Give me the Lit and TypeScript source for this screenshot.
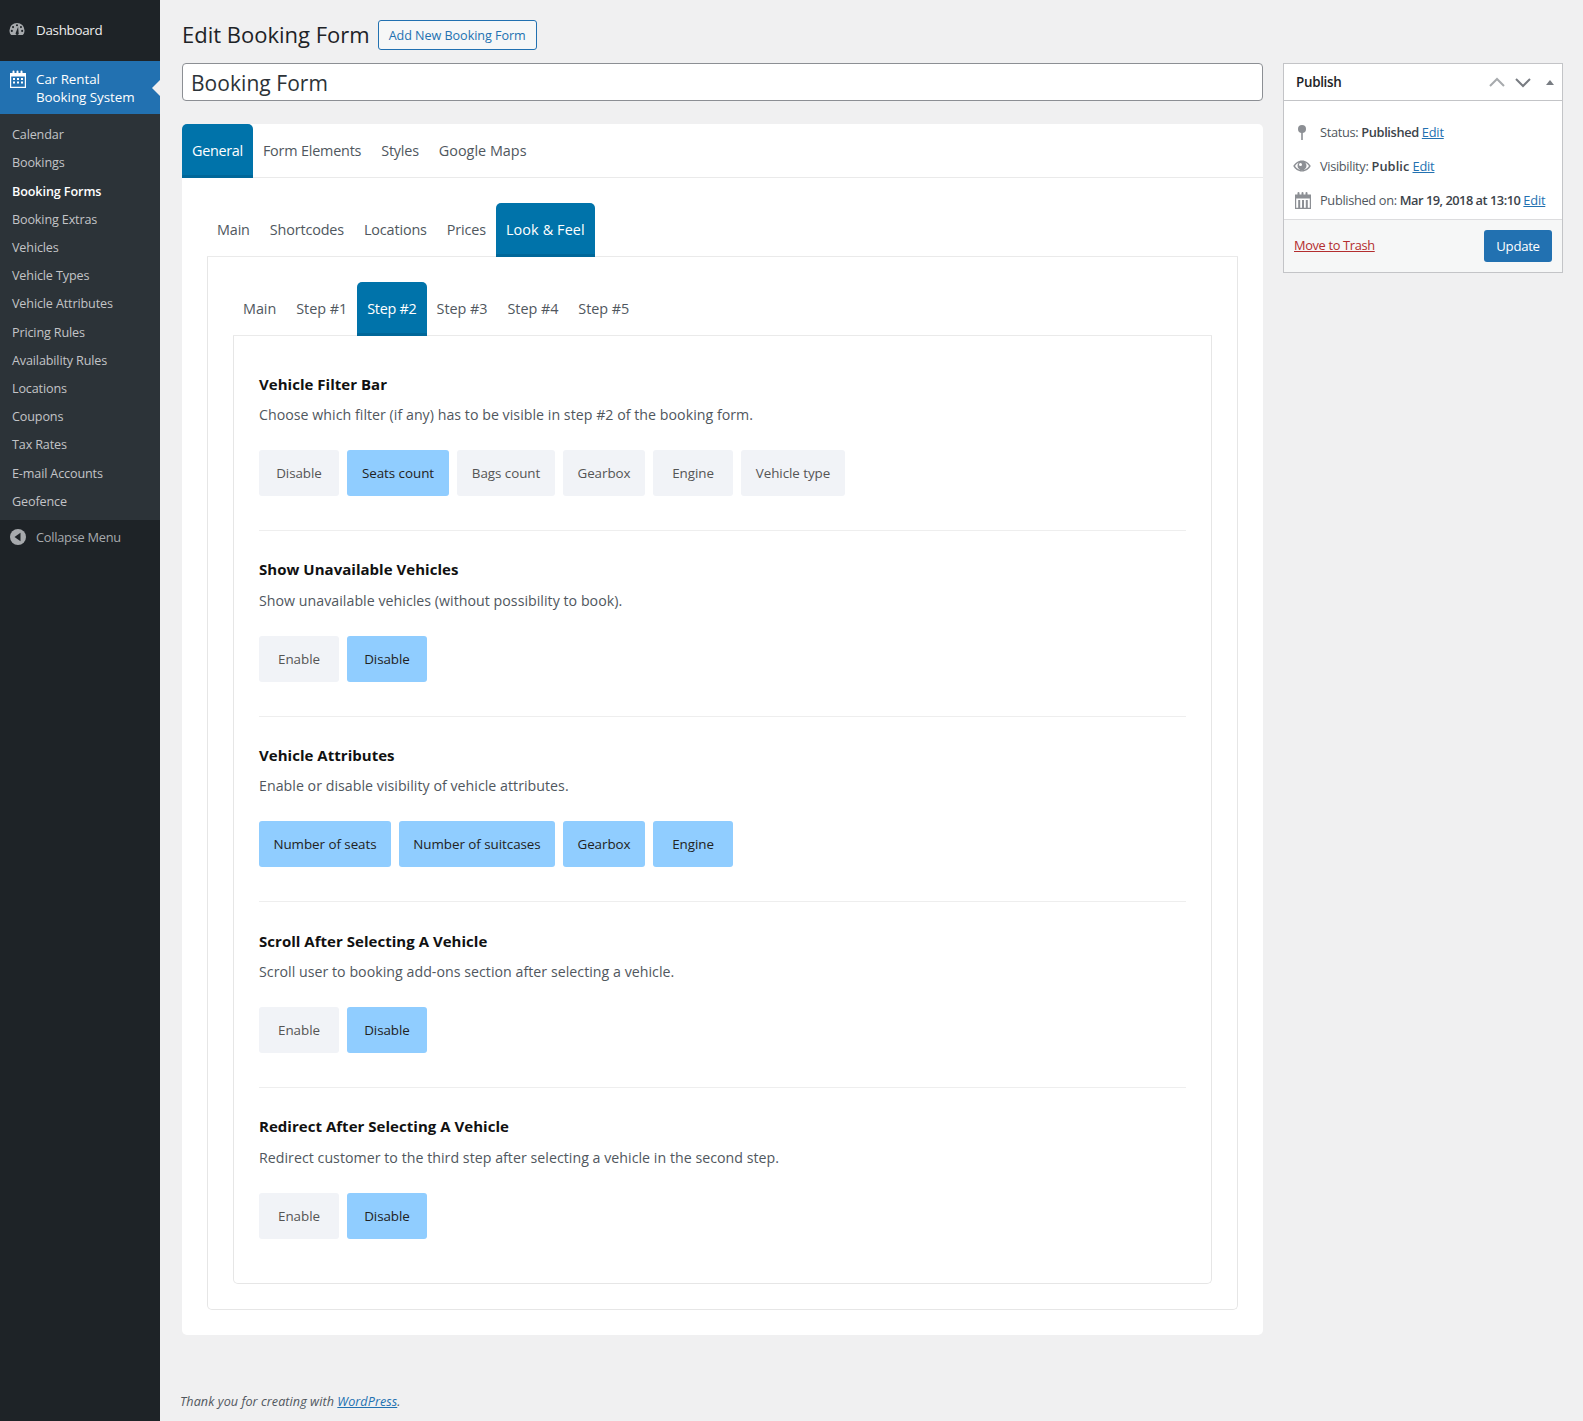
import { LitElement, html, css, svg } from "lit";
import { customElement } from "lit/decorators.js";

const menu = ["Calendar","Bookings","Booking Forms","Booking Extras","Vehicles","Vehicle Types","Vehicle Attributes","Pricing Rules","Availability Rules","Locations","Coupons","Tax Rates","E-mail Accounts","Geofence"];
const sections = [
  { t: "Vehicle Filter Bar", d: "Choose which filter (if any) has to be visible in step #2 of the booking form.", b: [["Disable",0,80],["Seats count",1,102],["Bags count",0,98],["Gearbox",0,82],["Engine",0,80],["Vehicle type",0,104]] },
  { t: "Show Unavailable Vehicles", d: "Show unavailable vehicles (without possibility to book).", b: [["Enable",0,80],["Disable",1,80]] },
  { t: "Vehicle Attributes", d: "Enable or disable visibility of vehicle attributes.", b: [["Number of seats",1,132],["Number of suitcases",1,156],["Gearbox",1,82],["Engine",1,80]] },
  { t: "Scroll After Selecting A Vehicle", d: "Scroll user to booking add-ons section after selecting a vehicle.", b: [["Enable",0,80],["Disable",1,80]] },
  { t: "Redirect After Selecting A Vehicle", d: "Redirect customer to the third step after selecting a vehicle in the second step.", b: [["Enable",0,80],["Disable",1,80]] },
];

@customElement("app-root")
export class AppRoot extends LitElement {
  static styles = css`
    :host { display: block; font-family: "Open Sans", "Noto Sans", sans-serif; font-size: 13px; color: #444; background: #f0f0f1; height: 1421px; }
    * { box-sizing: border-box; }
    .page { display: flex; height: 1421px; overflow: hidden; background: #f0f0f1; }
    .side { width: 160px; flex: none; background: #1e2327; color: #eee; }
    .dash { height: 61px; display: flex; align-items: flex-start; gap: 11px; padding: 19px 0 0 9px; font-size: 13.4px; letter-spacing: -.3px; }
    .dash span { line-height: 22px; }
    .dash svg { margin-top: 3px; }
    .active { height: 53px; background: #2271b1; color: #fff; position: relative; display: flex; gap: 10px; padding: 9px 0 0 10px; line-height: 18px; font-size: 13.4px; letter-spacing: -.05px; }
    .active::after { content: ""; position: absolute; right: 0; top: 19px; border: 8px solid transparent; border-right-color: #f0f0f1; border-left-width: 0; }
    .sub { background: #2c3338; height: 406px; padding-top: 7.07px; }
    .sub div { height: 28.22px; line-height: 28px; padding-left: 12px; color: #c3c4c7; font-size: 12.6px; letter-spacing: -.14px; }
    .sub div.on { color: #fff; font-weight: 600; letter-spacing: -.1px; }
    .collapse { display: flex; align-items: center; gap: 10px; padding: 6px 0 0 10px; color: #a7aaad; font-size: 12.8px; letter-spacing: -.25px; line-height: 22px; }
    .main { flex: 1; min-width: 0; padding-left: 22px; position: relative; }
    .head { height: 63px; display: flex; align-items: flex-start; padding-top: 19px; }
    .head h1 { margin: 0; font-size: 22px; font-weight: 400; color: #1d2327; line-height: 30px; letter-spacing: 0; }
    .add { margin: 1px 0 0 8px; height: 30px; width: 159px; text-align: center; line-height: 29px; border: 1px solid #2271b1; border-radius: 3px; color: #2271b1; background: #f6f7f7; font-size: 12.6px; letter-spacing: -.05px; }
    .cols { display: flex; gap: 20px; }
    .left { width: 1081px; }
    .title { height: 38px; border: 1px solid #8c8f94; border-radius: 4px; background: #fff; font-size: 21px; color: #2c3338; padding-left: 8px; line-height: 38px; letter-spacing: .05px; }
    .card { margin-top: 23px; background: #fff; border-radius: 5px; height: 1211px; }
    .tabs { display: flex; border-bottom: 1px solid #eaeaea; height: 54px; }
    .tab { height: 54px; padding: 0 10px; line-height: 53px; font-size: 14.4px; color: #50575e; letter-spacing: -.12px; flex: none; }
    .tab.on { background: #0073aa; color: #fff; border-radius: 5px 5px 0 0; border-bottom: 3px solid #006799; }
    .top .tab { letter-spacing: -.2px; }
    .top .tab.on { letter-spacing: -.3px; }
    .top .tab:last-child { letter-spacing: 0; }
    .mid .tab { letter-spacing: -.15px; }
    .mid .tab.on { letter-spacing: .12px; }
    .low .tab { letter-spacing: -.04px; }
    .low .tab.on { letter-spacing: -.25px; }
    .p1 { padding: 25px; }
    .p2 { border: 1px solid #e6e6e6; border-top: 0; height: 1053px; border-radius: 0 0 5px 5px; padding: 25px; }
    .p3 { border: 1px solid #e6e6e6; border-top: 0; height: 948px; border-radius: 0 0 5px 5px; padding: 37px 25px 0; }
    .sec { height: 185.7px; border-bottom: 1px solid #eee; padding-top: 27.2px; }
    .sec:last-child { border-bottom: 0; }
    .sec:first-child { height: 158px; padding-top: 0; }
    .sec h3 { margin: 0; font-size: 15px; font-weight: 700; color: #111; line-height: 22px; letter-spacing: .03px; }
    .sec p { margin: 9.4px 0 0; font-size: 14.2px; line-height: 22px; color: #50575e; letter-spacing: .03px; }
    .btns { display: flex; gap: 8px; margin-top: 24px; }
    .btn { height: 46px; background: #f1f3f7; border-radius: 3px; text-align: center; line-height: 46px; font-size: 13.4px; color: #555; letter-spacing: -.05px; }
    .btn.on { background: #90cdff; color: #222; }
    .box { width: 280px; height: 210px; border: 1px solid #c3c4c7; background: #fff; flex: none; }
    .bh { height: 37px; border-bottom: 1px solid #c3c4c7; display: flex; align-items: center; padding: 0 6px 0 12px; font-weight: 600; font-size: 13.4px; color: #1d2327; letter-spacing: -.3px; }
    .bh b { flex: 1; font-weight: 600; }
    .rows { height: 118px; padding-top: 14px; }
    .row { height: 34px; display: flex; align-items: center; font-size: 12.8px; color: #50575e; letter-spacing: -.33px; line-height: 34px; }
    .row .ic { width: 36px; flex: none; display: flex; justify-content: flex-start; padding-left: 10px; }
    .row .ic.cal { padding-left: 11px; }
    .row .ic.eye { padding-left: 9px; }
    .row .txt { white-space: nowrap; }
    .row b { font-weight: 600; color: #3c434a; letter-spacing: -.36px; }
    .row b.pub { letter-spacing: .1px; }
    .row b.date { letter-spacing: -.48px; }
    .row a { letter-spacing: -.2px; }
    a { color: #2271b1; text-decoration: underline; }
    .bf { height: 53px; background: #f6f7f7; border-top: 1px solid #dcdcde; display: flex; justify-content: space-between; align-items: center; padding: 0 10px; }
    .bf a { color: #b32d2e; font-size: 12.8px; letter-spacing: -.33px; margin-top: -2px; }
    .up { width: 68px; height: 32px; background: #2271b1; color: #fff; border-radius: 3px; text-align: center; line-height: 32px; font-size: 13.2px; letter-spacing: -.3px; }
    .foot { position: absolute; left: 20px; top: 1392px; font-style: italic; font-size: 12.6px; color: #50575e; letter-spacing: .07px; line-height: 20px; }
    svg { display: block; flex: none; }
  `;

  private cal(color: string) {
    return html`<svg width="16" height="18" viewBox="0 0 16 18">${svg`<path fill="${color}" d="M0 3h2.500V1.500a1 1 0 0 1 2 0V3h2V1.500a1 1 0 0 1 2 0V3h2V1.500a1 1 0 0 1 2 0V3H16v15H0zM1.200 6.500v10.300h13.600V6.500zM3 8h2v2H3zm4 0h2v2H7zm4 0h2v2h-2zm-8 3.500h2v2H3zm4 0h2v2H7zm4 0h2v2h-2z"/>`}</svg>`;
  }

  render() {
    const top = ["General","Form Elements","Styles","Google Maps"];
    const mid = ["Main","Shortcodes","Locations","Prices","Look & Feel"];
    const low = ["Main","Step #1","Step #2","Step #3","Step #4","Step #5"];
    return html`<div class="page">
      <aside class="side">
        <div class="dash">
          <svg width="16" height="14" viewBox="0 1 17 14">${svg`<path fill="#a7aaad" d="M8.500 1.500a8 8 0 0 0-8 8c0 2 .7 3.800 2 5h12c1.300-1.200 2-3 2-5a8 8 0 0 0-8-8z"/><circle cx="8.500" cy="4" r="1.100" fill="#1e2327"/><circle cx="4.300" cy="6" r="1.100" fill="#1e2327"/><circle cx="12.700" cy="6" r="1.100" fill="#1e2327"/><circle cx="3" cy="10" r="1.100" fill="#1e2327"/><circle cx="14" cy="10" r="1.100" fill="#1e2327"/><path fill="#1e2327" d="M9.700 5.500 10.200 12a1.700 1.700 0 1 1-3 0z"/>`}</svg>
          <span>Dashboard</span>
        </div>
        <div class="active">${this.cal("#fff")}<span>Car Rental<br />Booking System</span></div>
        <div class="sub">${menu.map((m) => html`<div class="${m === "Booking Forms" ? "on" : ""}">${m}</div>`)}</div>
        <div class="collapse">
          <svg width="16" height="16" viewBox="0 0 16 16">${svg`<circle cx="8" cy="8" r="8" fill="#a7aaad"/><path fill="#1e2327" d="M10.500 3.800v8.400L4.500 8z"/>`}</svg>
          <span>Collapse Menu</span>
        </div>
      </aside>
      <main class="main">
        <div class="head"><h1>Edit Booking Form</h1><div class="add">Add New Booking Form</div></div>
        <div class="cols">
          <div class="left">
            <div class="title">Booking Form</div>
            <div class="card">
              <div class="tabs top">${top.map((t, i) => html`<div class="tab ${i === 0 ? "on" : ""}">${t}</div>`)}</div>
              <div class="p1">
                <div class="tabs mid">${mid.map((t, i) => html`<div class="tab ${i === 4 ? "on" : ""}">${t}</div>`)}</div>
                <div class="p2">
                  <div class="tabs low">${low.map((t, i) => html`<div class="tab ${i === 2 ? "on" : ""}">${t}</div>`)}</div>
                  <div class="p3">
                    ${sections.map((s) => html`<div class="sec">
                      <h3>${s.t}</h3><p>${s.d}</p>
                      <div class="btns">${s.b.map((b) => html`<div class="btn ${b[1] ? "on" : ""}" style="width:${b[2]}px">${b[0]}</div>`)}</div>
                    </div>`)}
                  </div>
                </div>
              </div>
            </div>
          </div>
          <div class="box">
            <div class="bh"><b>Publish</b>
              <svg width="67" height="20" viewBox="0 0 67 20">${svg`<path d="M1 14l7-7 7 7" fill="none" stroke="#a7aaad" stroke-width="2"/><path d="M27 7l7 7 7-7" fill="none" stroke="#787c82" stroke-width="2"/><path d="M57 13l4-5 4 5z" fill="#787c82"/>`}</svg>
            </div>
            <div class="rows">
              <div class="row"><span class="ic"><svg width="16" height="16" viewBox="0 0 16 16">${svg`<circle cx="8" cy="5" r="4" fill="#8c8f94"/><rect x="7.200" y="6" width="1.600" height="10" fill="#8c8f94"/>`}</svg></span><span class="txt">Status: <b>Published</b> <a>Edit</a></span></div>
              <div class="row"><span class="ic eye"><svg width="18" height="14" viewBox="0 0 18 14">${svg`<path fill="#8c8f94" fill-rule="evenodd" d="M9 1.500C5 1.500 2 4 .200 7 2 10 5 12.500 9 12.500S16 10 17.800 7C16 4 13 1.500 9 1.500zM2 7c1-1.500 2.200-2.700 3.800-3.500A4.500 4.500 0 1 0 12.200 3.500C13.800 4.300 15 5.500 16 7c-1.700 2.500-4 4-7 4S3.700 9.500 2 7z"/><circle cx="7.500" cy="5.500" r="1.500" fill="#fff"/>`}</svg></span><span class="txt">Visibility: <b class="pub">Public</b> <a>Edit</a></span></div>
              <div class="row"><span class="ic cal"><svg width="16" height="17" viewBox="0 0 16 17">${svg`<path fill="#8c8f94" fill-rule="evenodd" d="M0 2.500h2.500V1a1 1 0 0 1 2 0v1.500h2V1a1 1 0 0 1 2 0v1.500h2V1a1 1 0 0 1 2 0v1.500H16V17H0zM1.200 6.500v9.300h2V8h2v7.800h1.800V8h2v7.800h1.800V8h2v7.800h2V6.500z"/>`}</svg></span><span class="txt">Published on: <b class="date">Mar 19, 2018 at 13:10</b> <a>Edit</a></span></div>
            </div>
            <div class="bf"><a>Move to Trash</a><div class="up">Update</div></div>
          </div>
        </div>
        <div class="foot">Thank you for creating with <a>WordPress</a>.</div>
      </main>
    </div>`;
  }
}
